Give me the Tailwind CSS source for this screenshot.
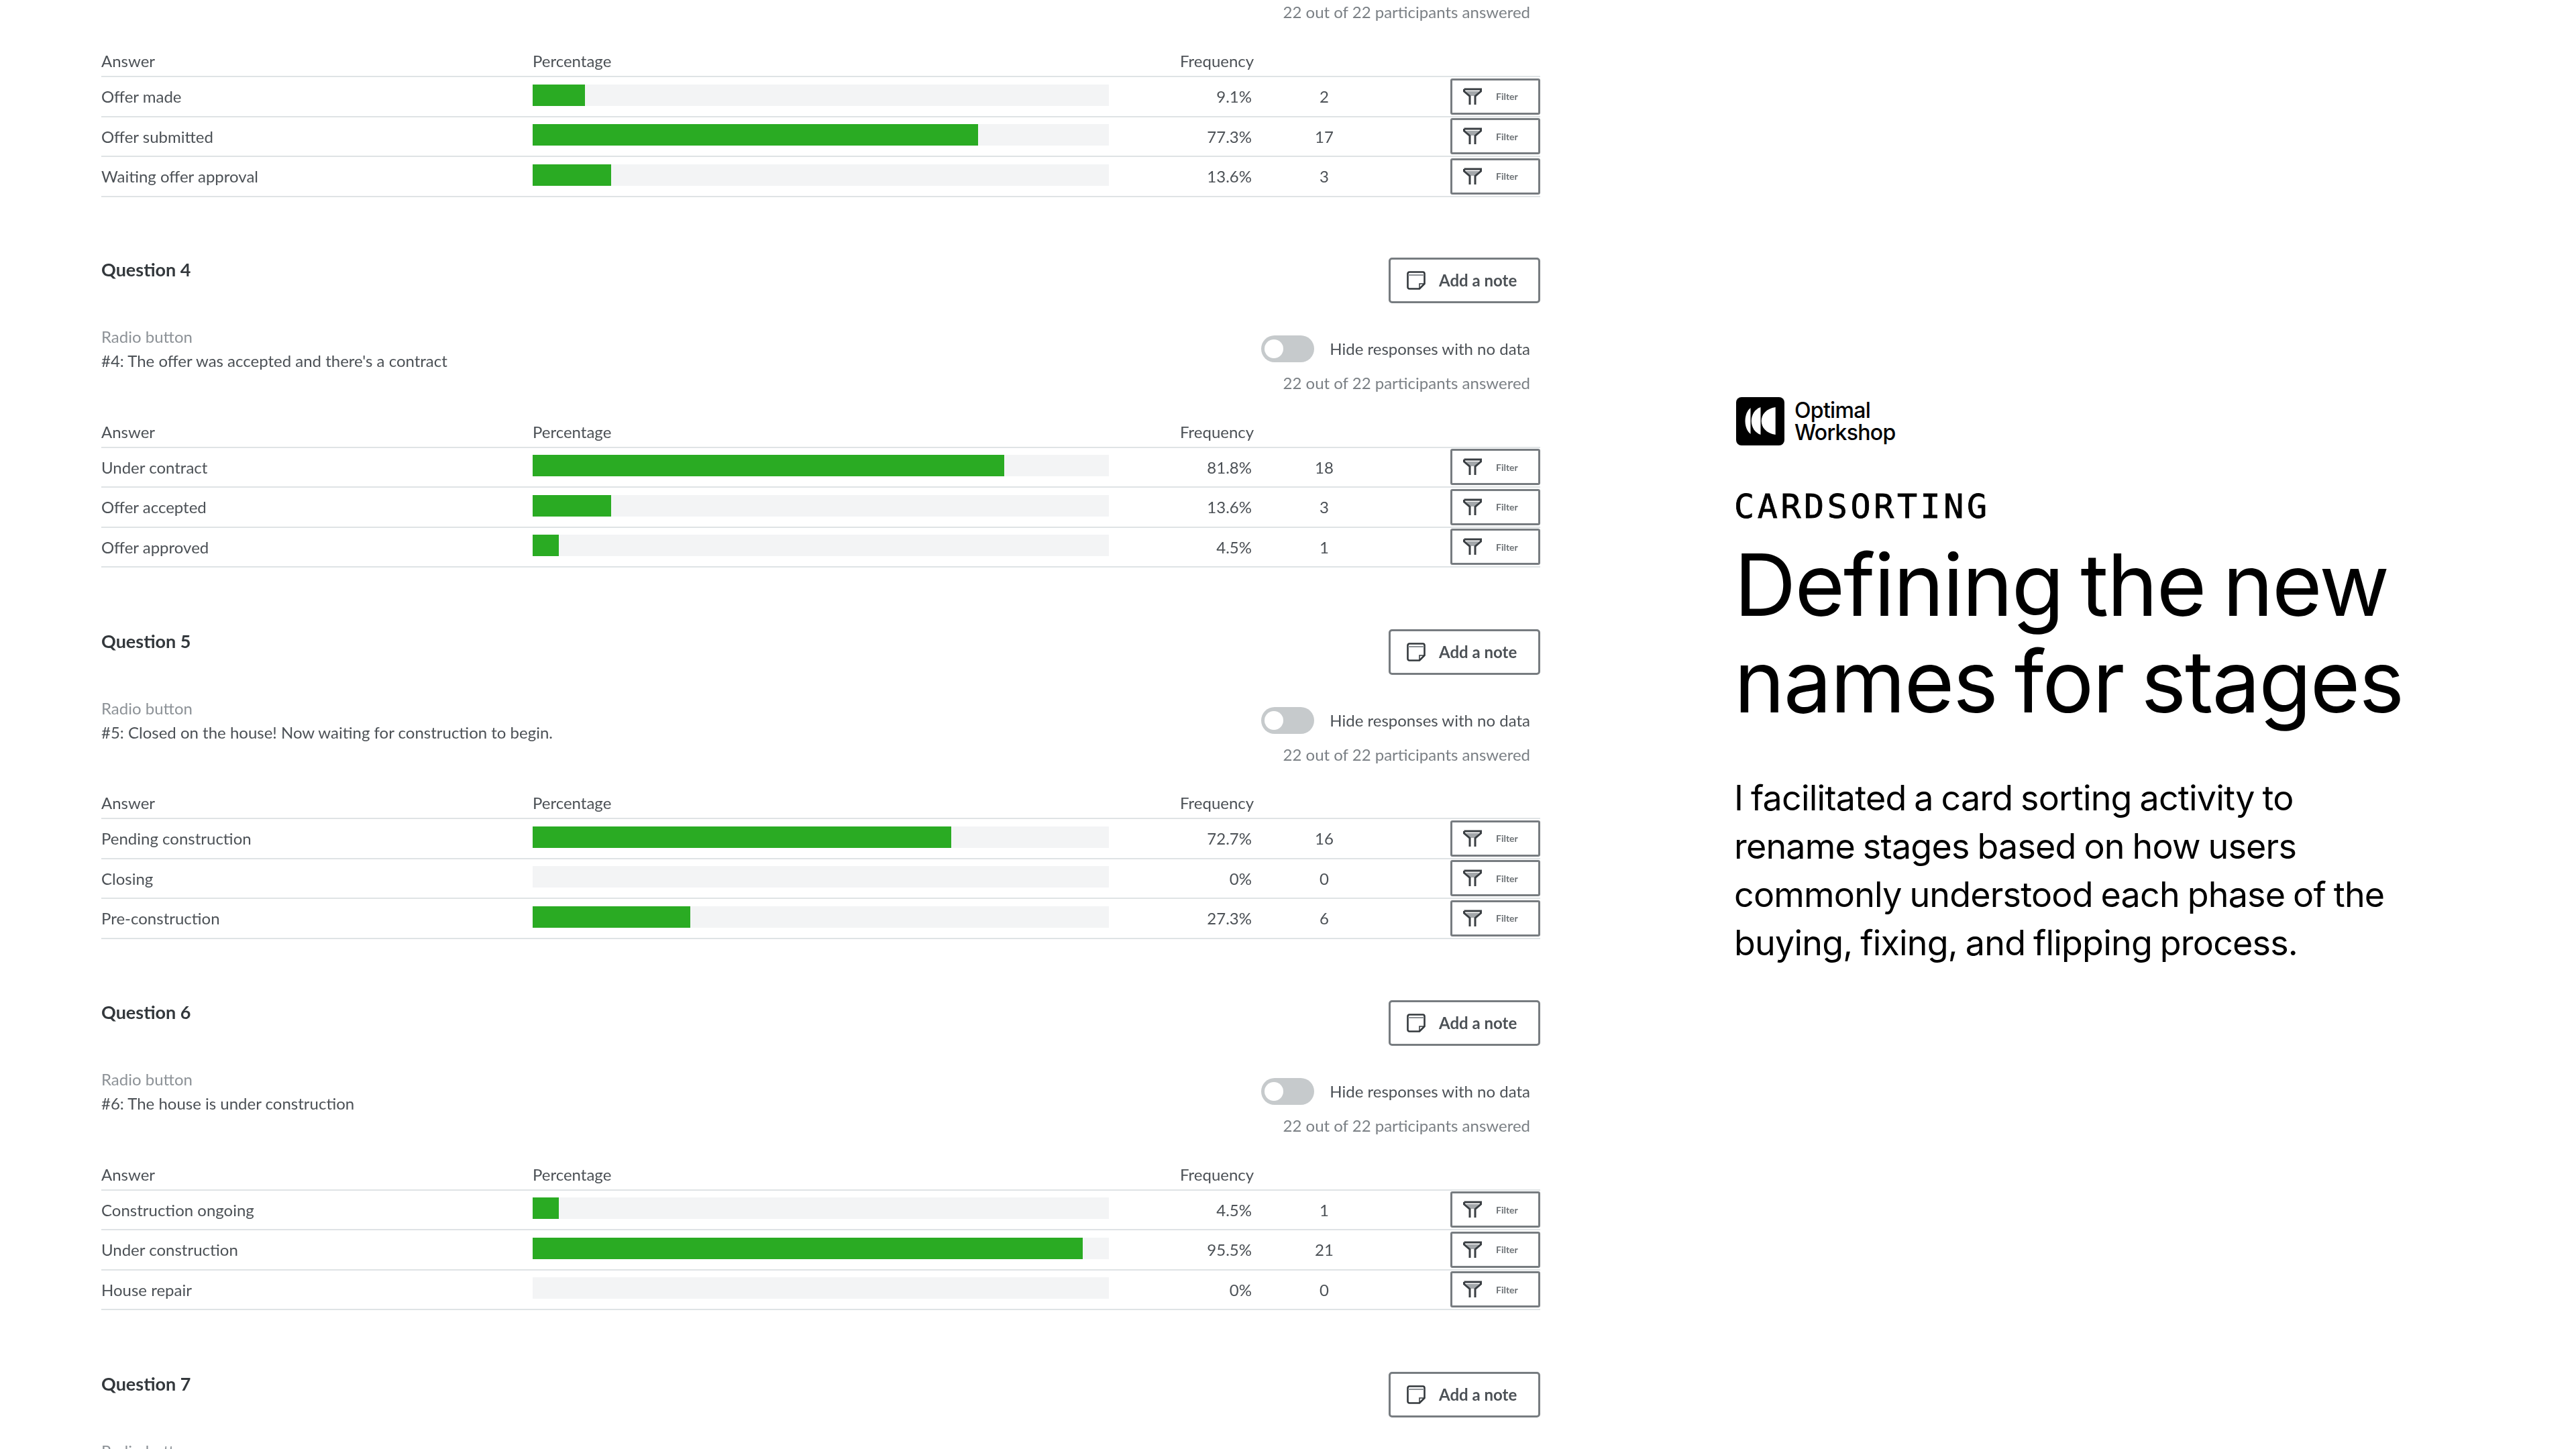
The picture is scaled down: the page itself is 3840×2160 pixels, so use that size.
<!DOCTYPE html>
<html lang="en">
<head>
    <meta charset="UTF-8">
    <meta name="viewport" content="width=device-width, initial-scale=1.0">
    <title>Cardsorting</title>
    <script src="https://cdn.jsdelivr.net/npm/@tailwindcss/browser@4"></script>
</head>
<body class="bg-white text-black">
    <div class="flex h-[2160px] overflow-hidden">
        <!-- Results screenshot, cut off by the top and bottom edges -->
        <div id="questions" class="w-[2145px] ml-[151px] shrink-0 blur-[0.7px] font-['Lato',sans-serif] text-[24px] text-[#4c5156]"></div>

        <!-- Case study copy -->
        <div class="ml-[289px] pt-[592px]">
            <div class="flex items-center gap-[15px] ml-[3px]">
                <svg class="w-[72px] h-[72px]" viewBox="0 0 72 72">
                    <rect width="72" height="72" rx="8" fill="#000"/>
                    <path fill="#fff" d="M58.7 15C45 17 37.7 26 37.7 35.5C37.7 45 45 54 58.7 56Z"/>
                    <path fill="#fff" d="M36.5 15C28 18 22.8 26 22.8 35.5C22.8 45 28 53 36.5 56Z"/>
                    <path fill="#fff" d="M21.5 16C16.5 20 13.5 27 13.5 35.5C13.5 44 16.5 51 21.5 55Z"/>
                </svg>
                <div class="font-['Inter',sans-serif] font-medium text-[32px] leading-[33px] tracking-[-0.7px]">Optimal<br>Workshop</div>
            </div>
            <div class="mt-[61px] font-['DejaVu_Sans_Mono',monospace] text-[50px] leading-[60px] tracking-[4.6px] [-webkit-text-stroke:0.8px_black]">CARDSORTING</div>
            <h1 class="mt-[15px] font-['Inter',sans-serif] text-[128px] leading-[144px] tracking-[-2px] [word-spacing:-8px] whitespace-nowrap">Defining the new<br>names for stages</h1>
            <p class="mt-[66px] font-['Inter',sans-serif] text-[52px] leading-[72px] tracking-[-0.8px] [word-spacing:-2px] whitespace-nowrap">I facilitated a card sorting activity to<br>rename stages based on how users<br>commonly understood each phase of the<br>buying, fixing, and flipping process.</p>
        </div>
    </div>

    <script>
        const filterIcon = `<svg class="w-[28px] h-[26px]" viewBox="0 0 28 26" fill="none" stroke="#3a3f43" stroke-width="3"><path d="M4 5H24L17 12H11Z" fill="#a3a7aa" stroke="none"/><path d="M1.5 2H26.5V5L18 12.5V25M1.5 2V5L10 12.5V25"/></svg>`;
        const noteIcon = `<svg class="w-[28px] h-[28px]" viewBox="0 0 28 28" fill="none" stroke="#33383c" stroke-width="2.6"><path d="M4 1.5H24A2.5 2.5 0 0 1 26.5 4V19L19 26.5H4A2.5 2.5 0 0 1 1.5 24V4A2.5 2.5 0 0 1 4 1.5Z"/><path d="M2 6H26" stroke="#8b9094" stroke-width="2"/><path d="M26 19H19V26" stroke-width="1.5"/></svg>`;

        const answered = `<div class="leading-[40px] text-[#7b8085]">22 out of 22 participants answered</div>`;

        function rowHtml([label, pct, count]) {
            return `
            <div class="grid grid-cols-[643px_859px_213px_216px_214px] items-center h-[59.5px] border-b-2 border-[#dfe3e5]">
                <div class="pt-[1px]">${label}</div>
                <div class="h-[32px] -mt-[4px] bg-[#f3f4f5]"><div class="h-full bg-[#2aab23]" style="width:${pct}%"></div></div>
                <div class="text-right pt-[1px]">${pct}%</div>
                <div class="text-center pt-[1px]">${count}</div>
                <div class="flex justify-end">
                    <div class="w-[134px] h-[54px] flex items-center pl-[16px] gap-[21px] bg-white border-[3px] border-[#777c80] rounded-[3px] text-[14px] font-bold text-[#6c7175]">${filterIcon}<span>Filter</span></div>
                </div>
            </div>`;
        }

        function tableHtml(rows) {
            return `
                <div class="mt-[31px] grid grid-cols-[643px_965px_1fr] items-center h-[45.5px] border-b-2 border-[#dfe3e5]">
                    <div>Answer</div>
                    <div>Percentage</div>
                    <div>Frequency</div>
                </div>
                ${rows.map(rowHtml).join("")}`;
        }

        function titleHtml(n) {
            return `
                <div class="flex justify-between h-[68px]">
                    <h2 class="text-[27px] leading-[36px] font-bold text-[#33383c]">Question ${n}</h2>
                    <div class="w-[226px] h-[68px] flex items-center pl-[24px] gap-[20px] border-[3px] border-[#777c80] rounded-[5px] font-bold text-[#4c5156]">${noteIcon}<span>Add a note</span></div>
                </div>`;
        }

        const toggle = `<div class="w-[79px] h-[40px] flex items-center pl-[5px] rounded-full bg-[#c6cacc]"><div class="w-[28px] h-[28px] rounded-full bg-white"></div></div>`;

        const questions = [
            { n: 4, text: "#4: The offer was accepted and there's a contract", rows: [["Under contract", 81.8, 18], ["Offer accepted", 13.6, 3], ["Offer approved", 4.5, 1]] },
            { n: 5, text: "#5: Closed on the house! Now waiting for construction to begin.", rows: [["Pending construction", 72.7, 16], ["Closing", 0, 0], ["Pre-construction", 27.3, 6]] },
            { n: 6, text: "#6: The house is under construction", rows: [["Construction ongoing", 4.5, 1], ["Under construction", 95.5, 21], ["House repair", 0, 0]] },
        ];

        // question 3 only shows its table, question 7 only its heading
        const firstBlock = `
            <section class="h-[384px]">
                <div class="flex justify-end pr-[15px] h-[38.5px] leading-[35px] text-[#7b8085]">22 out of 22 participants answered</div>
                ${tableHtml([["Offer made", 9.1, 2], ["Offer submitted", 77.3, 17], ["Waiting offer approval", 13.6, 3]])}
            </section>`;

        const middleBlocks = questions.map(q => `
            <section class="h-[553.5px]">
                ${titleHtml(q.n)}
                <div class="flex justify-between mt-[32px] h-[107px]">
                    <div class="leading-[36px]">
                        <div class="text-[#8d9297]">Radio button</div>
                        <div>${q.text}</div>
                    </div>
                    <div class="flex flex-col items-end pt-[16px] pr-[15px]">
                        <div class="flex items-center gap-[23px] h-[40px] mb-[11px]">
                            ${toggle}
                            <span>Hide responses with no data</span>
                        </div>
                        ${answered}
                    </div>
                </div>
                ${tableHtml(q.rows)}
            </section>`).join("");

        const lastBlock = `
            <section>
                ${titleHtml(7)}
                <div class="flex justify-between mt-[32px]">
                    <div class="leading-[36px] text-[#8d9297]">Radio button</div>
                    <div class="pt-[16px] pr-[336px]">${toggle}</div>
                </div>
            </section>`;

        document.getElementById("questions").innerHTML = firstBlock + middleBlocks + lastBlock;
    </script>
</body>
</html>
